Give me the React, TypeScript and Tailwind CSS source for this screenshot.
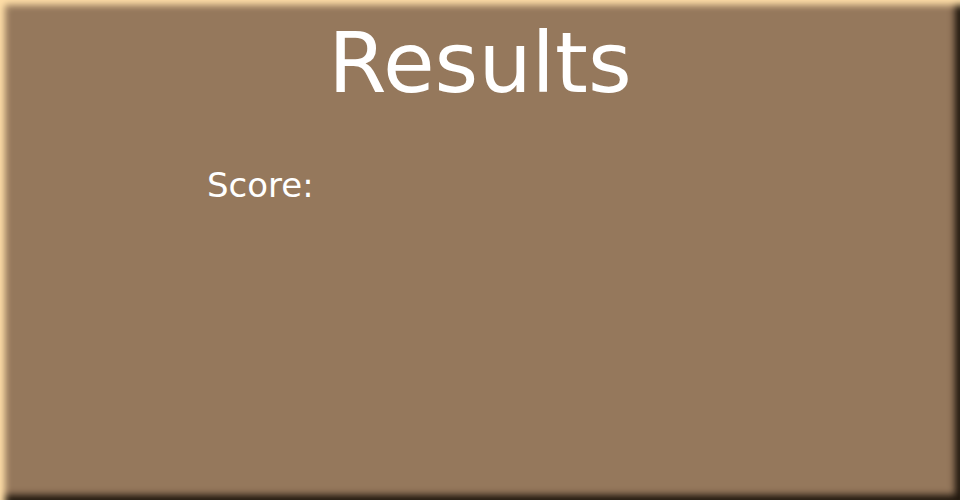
export default function App() {
  return (
    <div
      className="w-[960px] h-[500px] bg-[#95785c] flex flex-col text-white shadow-[inset_6px_6px_7px_-1px_#ffdfa8,inset_-6px_-6px_7px_-1px_#20170e]"
      style={{ fontFamily: '"DejaVu Sans", sans-serif' }}
    >
      <div className="text-center text-[84px] leading-none pt-[21px]">Results</div>
      <div className="pl-[207px] pt-[63px] text-[34px] leading-none">Score:</div>
    </div>
  );
}
